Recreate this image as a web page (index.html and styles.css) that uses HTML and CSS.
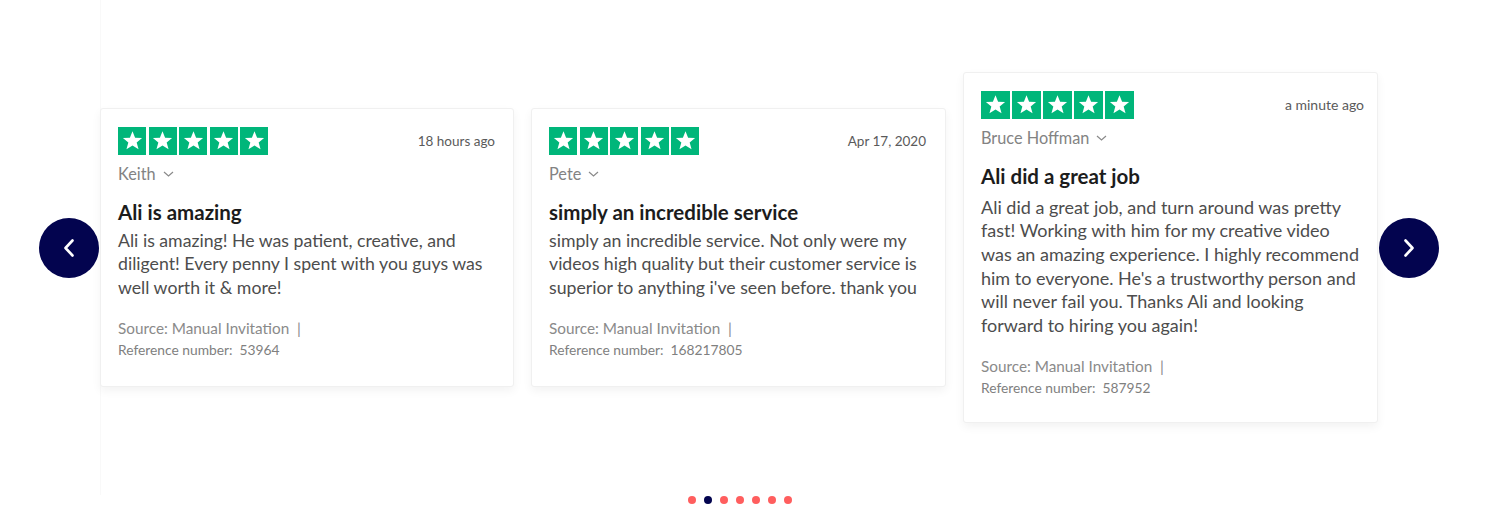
FILE: index.html
```html
<!DOCTYPE html>
<html lang="en">
<head>
<meta charset="utf-8">
<title>Reviews</title>
<link rel="stylesheet" href="styles.css">
</head>
<body>
<div class="page">
  <div class="stage">
    <button class="nav nav-prev" aria-label="Previous">
      <svg width="14" height="22" viewBox="0 0 14 22"><path d="M10.5 3.5 3.5 11l7 7.5" fill="none" stroke="#fff" stroke-width="2.6" stroke-linecap="round" stroke-linejoin="round"/></svg>
    </button>
    <div class="viewport">
      <article class="card">
        <div class="card-head">
          <div class="stars">
            <span class="star"><svg viewBox="0 0 24 24"><polygon points="12,3.2 14.5,9.4 21.2,9.7 16,13.9 17.8,20.4 12,16.7 6.2,20.4 8,13.9 2.8,9.7 9.5,9.4" fill="#fff"/></svg></span>
            <span class="star"><svg viewBox="0 0 24 24"><polygon points="12,3.2 14.5,9.4 21.2,9.7 16,13.9 17.8,20.4 12,16.7 6.2,20.4 8,13.9 2.8,9.7 9.5,9.4" fill="#fff"/></svg></span>
            <span class="star"><svg viewBox="0 0 24 24"><polygon points="12,3.2 14.5,9.4 21.2,9.7 16,13.9 17.8,20.4 12,16.7 6.2,20.4 8,13.9 2.8,9.7 9.5,9.4" fill="#fff"/></svg></span>
            <span class="star"><svg viewBox="0 0 24 24"><polygon points="12,3.2 14.5,9.4 21.2,9.7 16,13.9 17.8,20.4 12,16.7 6.2,20.4 8,13.9 2.8,9.7 9.5,9.4" fill="#fff"/></svg></span>
            <span class="star"><svg viewBox="0 0 24 24"><polygon points="12,3.2 14.5,9.4 21.2,9.7 16,13.9 17.8,20.4 12,16.7 6.2,20.4 8,13.9 2.8,9.7 9.5,9.4" fill="#fff"/></svg></span>
          </div>
          <span class="date">18 hours ago</span>
        </div>
        <div class="author">Keith <svg class="caret" width="11" height="6" viewBox="0 0 11 6"><path d="M1 1l4.5 4 4.5-4" fill="none" stroke="#8a8a8a" stroke-width="1.2"/></svg></div>
        <h3 class="title">Ali is amazing</h3>
        <p class="text">Ali is amazing! He was patient, creative, and diligent! Every penny I spent with you guys was well worth it &amp; more!</p>
        <div class="source">Source: Manual Invitation&nbsp; |</div>
        <div class="ref">Reference number:&nbsp; 53964</div>
      </article>

      <article class="card">
        <div class="card-head">
          <div class="stars">
            <span class="star"><svg viewBox="0 0 24 24"><polygon points="12,3.2 14.5,9.4 21.2,9.7 16,13.9 17.8,20.4 12,16.7 6.2,20.4 8,13.9 2.8,9.7 9.5,9.4" fill="#fff"/></svg></span>
            <span class="star"><svg viewBox="0 0 24 24"><polygon points="12,3.2 14.5,9.4 21.2,9.7 16,13.9 17.8,20.4 12,16.7 6.2,20.4 8,13.9 2.8,9.7 9.5,9.4" fill="#fff"/></svg></span>
            <span class="star"><svg viewBox="0 0 24 24"><polygon points="12,3.2 14.5,9.4 21.2,9.7 16,13.9 17.8,20.4 12,16.7 6.2,20.4 8,13.9 2.8,9.7 9.5,9.4" fill="#fff"/></svg></span>
            <span class="star"><svg viewBox="0 0 24 24"><polygon points="12,3.2 14.5,9.4 21.2,9.7 16,13.9 17.8,20.4 12,16.7 6.2,20.4 8,13.9 2.8,9.7 9.5,9.4" fill="#fff"/></svg></span>
            <span class="star"><svg viewBox="0 0 24 24"><polygon points="12,3.2 14.5,9.4 21.2,9.7 16,13.9 17.8,20.4 12,16.7 6.2,20.4 8,13.9 2.8,9.7 9.5,9.4" fill="#fff"/></svg></span>
          </div>
          <span class="date">Apr 17, 2020</span>
        </div>
        <div class="author">Pete <svg class="caret" width="11" height="6" viewBox="0 0 11 6"><path d="M1 1l4.5 4 4.5-4" fill="none" stroke="#8a8a8a" stroke-width="1.2"/></svg></div>
        <h3 class="title">simply an incredible service</h3>
        <p class="text">simply an incredible service. Not only were my videos high quality but their customer service is superior to anything i've seen before. thank you</p>
        <div class="source">Source: Manual Invitation&nbsp; |</div>
        <div class="ref">Reference number:&nbsp; 168217805</div>
      </article>

      <article class="card featured">
        <div class="card-head">
          <div class="stars">
            <span class="star"><svg viewBox="0 0 24 24"><polygon points="12,3.2 14.5,9.4 21.2,9.7 16,13.9 17.8,20.4 12,16.7 6.2,20.4 8,13.9 2.8,9.7 9.5,9.4" fill="#fff"/></svg></span>
            <span class="star"><svg viewBox="0 0 24 24"><polygon points="12,3.2 14.5,9.4 21.2,9.7 16,13.9 17.8,20.4 12,16.7 6.2,20.4 8,13.9 2.8,9.7 9.5,9.4" fill="#fff"/></svg></span>
            <span class="star"><svg viewBox="0 0 24 24"><polygon points="12,3.2 14.5,9.4 21.2,9.7 16,13.9 17.8,20.4 12,16.7 6.2,20.4 8,13.9 2.8,9.7 9.5,9.4" fill="#fff"/></svg></span>
            <span class="star"><svg viewBox="0 0 24 24"><polygon points="12,3.2 14.5,9.4 21.2,9.7 16,13.9 17.8,20.4 12,16.7 6.2,20.4 8,13.9 2.8,9.7 9.5,9.4" fill="#fff"/></svg></span>
            <span class="star"><svg viewBox="0 0 24 24"><polygon points="12,3.2 14.5,9.4 21.2,9.7 16,13.9 17.8,20.4 12,16.7 6.2,20.4 8,13.9 2.8,9.7 9.5,9.4" fill="#fff"/></svg></span>
          </div>
          <span class="date">a minute ago</span>
        </div>
        <div class="author">Bruce Hoffman <svg class="caret" width="11" height="6" viewBox="0 0 11 6"><path d="M1 1l4.5 4 4.5-4" fill="none" stroke="#8a8a8a" stroke-width="1.2"/></svg></div>
        <h3 class="title">Ali did a great job</h3>
        <p class="text">Ali did a great job, and turn around was pretty fast! Working with him for my creative video was an amazing experience. I highly recommend him to everyone. He's a trustworthy person and will never fail you. Thanks Ali and looking forward to hiring you again!</p>
        <div class="source">Source: Manual Invitation&nbsp; |</div>
        <div class="ref">Reference number:&nbsp; 587952</div>
      </article>
    </div>
    <button class="nav nav-next" aria-label="Next">
      <svg width="14" height="22" viewBox="0 0 14 22"><path d="M3.5 3.5 10.5 11l-7 7.5" fill="none" stroke="#fff" stroke-width="2.6" stroke-linecap="round" stroke-linejoin="round"/></svg>
    </button>
  </div>
  <div class="dots">
    <span class="dot"></span>
    <span class="dot active"></span>
    <span class="dot"></span>
    <span class="dot"></span>
    <span class="dot"></span>
    <span class="dot"></span>
    <span class="dot"></span>
  </div>
</div>
</body>
</html>
```

FILE: styles.css
```css
* { box-sizing: border-box; }
html, body { margin: 0; padding: 0; background: #fff; }
body {
  font-family: Lato, "Liberation Sans", Arial, sans-serif;
  width: 1498px;
  height: 521px;
  overflow: hidden;
}
.page {
  display: flex;
  flex-direction: column;
}
.stage {
  height: 495px;
  display: flex;
  align-items: center;
  padding-left: 39px;
}
.viewport {
  width: 1279px;
  height: 495px;
  margin-left: 1px;
  display: flex;
  align-items: center;
  gap: 17px;
  border-left: 1px solid #f9f9f9;
}
.nav {
  width: 60px;
  height: 60px;
  border-radius: 50%;
  background: #03044f;
  border: none;
  padding: 0;
  display: flex;
  align-items: center;
  justify-content: center;
  flex: none;
  cursor: pointer;
}
.card {
  flex: none;
  width: 415px;
  background: #fff;
  border: 1px solid #f0f0f0;
  border-radius: 3px;
  box-shadow: 0 4px 10px rgba(0, 0, 0, 0.05);
  padding: 18px 18px 27px 17px;
}
.card:first-child {
  margin-left: -1px;
  width: 414px;
  padding-right: 17px;
}
.card-head {
  display: flex;
  justify-content: space-between;
  align-items: center;
}
.stars {
  display: flex;
  gap: 2.5px;
}
.star {
  width: 28px;
  height: 28px;
  background: #00b67a;
  display: flex;
  align-items: center;
  justify-content: center;
}
.star svg { width: 25px; height: 25px; }
.date {
  font-size: 13.5px;
  color: #5a5a5a;
  padding-right: 1px;
}
.author {
  margin-top: 9px;
  font-size: 16.3px;
  line-height: 20px;
  color: #838383;
  display: flex;
  align-items: center;
  gap: 7px;
}
.caret { margin-top: 1px; }
.title {
  margin: 16px 0 0;
  font-size: 20.5px;
  line-height: 24px;
  font-weight: 700;
  color: #1c1c1c;
}
.text {
  margin: 5px 0 0;
  font-size: 17.7px;
  line-height: 23.6px;
  color: #4d4d4d;
}
.source {
  margin-top: 19px;
  font-size: 15.3px;
  line-height: 20px;
  color: #8a8a8a;
}
.ref {
  margin-top: 3px;
  font-size: 13.8px;
  line-height: 18px;
  color: #808080;
}
.featured {
  padding-right: 12px;
  padding-bottom: 25px;
}
.featured .star { width: 28.6px; }
.featured .date { font-size: 14px; }
.featured .text {
  margin-top: 8px;
  font-size: 18px;
  padding-right: 3px;
}
.dots {
  display: flex;
  justify-content: center;
  gap: 8px;
  width: 1379px;
  padding-left: 100px;
  margin-top: 1px;
}
.dot {
  width: 8px;
  height: 8px;
  border-radius: 50%;
  background: #ff5e5e;
}
.dot.active { background: #03044f; }
```
